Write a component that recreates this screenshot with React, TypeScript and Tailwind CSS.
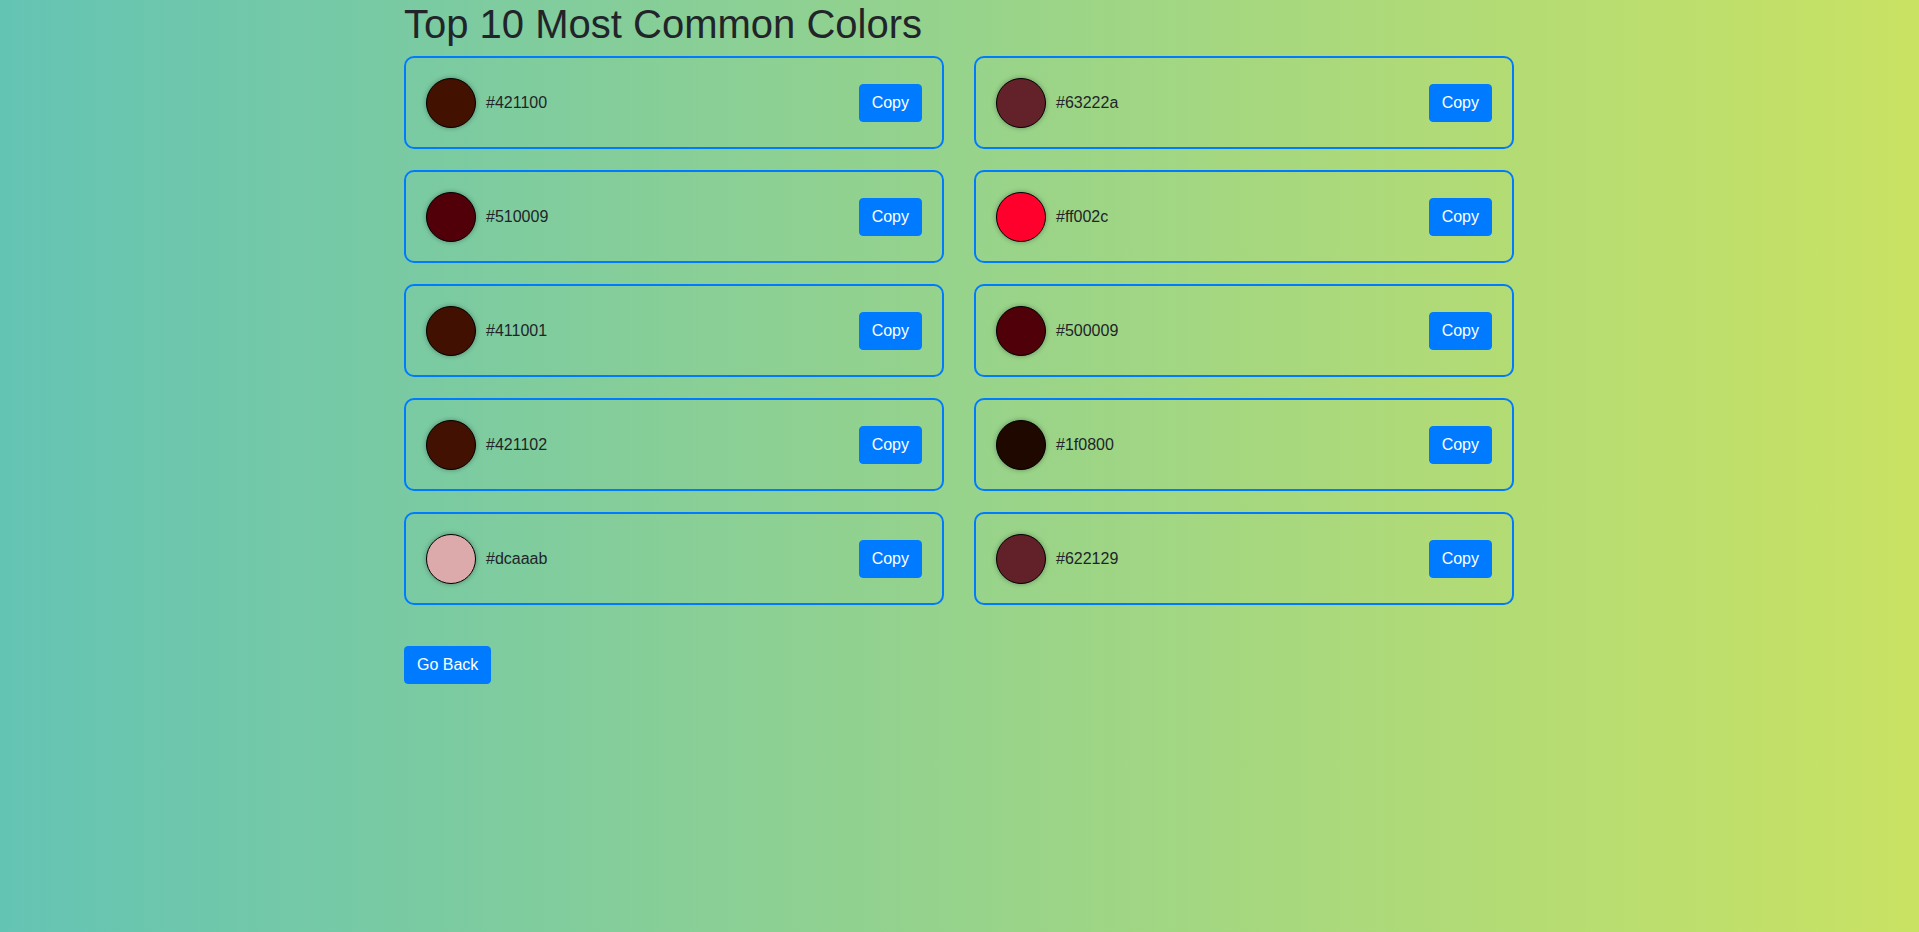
import { useState } from "react";

const colors = [
  "#421100",
  "#63222a",
  "#510009",
  "#ff002c",
  "#411001",
  "#500009",
  "#421102",
  "#1f0800",
  "#dcaaab",
  "#622129",
];

function ColorCard({ hex }: { hex: string }) {
  const [copied, setCopied] = useState(false);

  return (
    <div className="h-[93px] mb-[21px] border-2 border-[#007bff] rounded-[10px] px-[20px] flex items-center justify-between">
      <div className="flex items-center">
        <div
          className="w-[50px] h-[50px] rounded-full border border-black shadow-[0_0_5px_rgba(0,0,0,0.35)]"
          style={{ backgroundColor: hex }}
        />
        <span className="ml-[10px] text-[16px] text-[#212529]">{hex}</span>
      </div>
      <button
        onClick={() => {
          navigator.clipboard?.writeText(hex);
          setCopied(true);
        }}
        className="h-[38px] px-[12px] bg-[#007bff] border border-[#007bff] rounded-[4px] text-white text-[16px] leading-[24px]"
      >
        {copied ? "Copy" : "Copy"}
      </button>
    </div>
  );
}

export default function App() {
  return (
    <div
      className="min-h-[932px] bg-[linear-gradient(to_right,#64c4b4,#c9e263)] text-[#212529]"
      style={{ fontFamily: '"Liberation Sans", Arial, sans-serif' }}
    >
      <div className="w-[1141px] mx-auto pl-[15px] pr-[16px]">
        <h1 className="text-[40px] leading-[1.2] font-normal mb-[8px]">
          Top 10 Most Common Colors
        </h1>

        <div className="grid grid-cols-2 gap-x-[30px]">
          {colors.map((c) => (
            <ColorCard key={c} hex={c} />
          ))}
        </div>

        <button className="mt-[20px] h-[38px] px-[12px] bg-[#007bff] border border-[#007bff] rounded-[4px] text-white text-[16px] leading-[24px]">
          Go Back
        </button>
      </div>
    </div>
  );
}
